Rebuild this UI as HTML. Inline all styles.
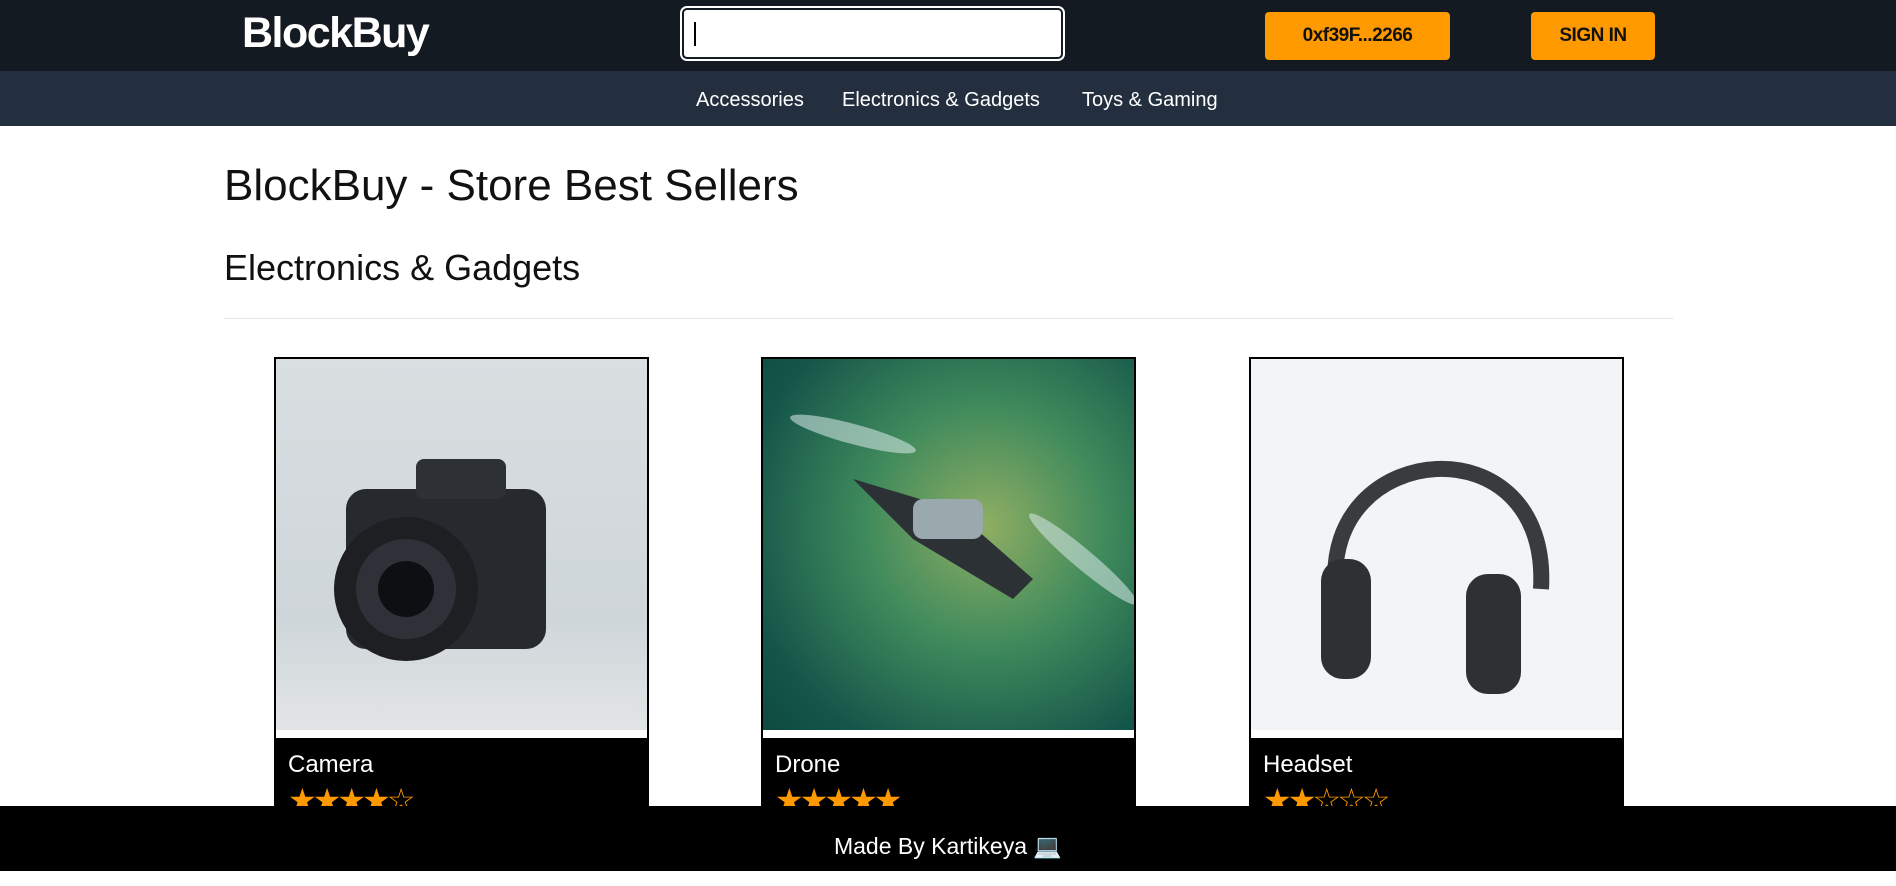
<!DOCTYPE html>
<html><head><meta charset="utf-8"><style>
*{margin:0;padding:0;box-sizing:border-box}
body{width:1896px;height:871px;overflow:hidden;background:#fff;font-family:"Liberation Sans",sans-serif;position:relative}
.top{position:absolute;left:0;top:0;width:1896px;height:71px;background:#131a22}
.logo{position:absolute;left:242px;top:9px;color:#fff;font-weight:bold;font-size:43px;letter-spacing:-1.5px}
.search{position:absolute;left:680px;top:6px;width:385px;height:55px;background:#fff;border-radius:7px;border:2px solid #fff;outline:2px solid #131a22;outline-offset:-4px}
.search:after{content:"";position:absolute;left:12px;top:14px;width:2px;height:24px;background:#000}
.btn{position:absolute;top:12px;height:48px;background:#ff9900;border-radius:4px;font-weight:bold;font-size:19px;color:#111;text-align:center;line-height:48px;letter-spacing:-0.5px}
.nav{position:absolute;left:0;top:71px;width:1896px;height:55px;background:#232f3e;color:#fff;font-size:20px}
.nav span{position:absolute;top:18px}
h1{position:absolute;left:224px;top:161px;font-weight:normal;font-size:44px;color:#111}
h2{position:absolute;left:224px;top:247px;font-weight:normal;font-size:36px;color:#111}
.hr{position:absolute;left:224px;top:318px;width:1449px;height:1px;background:#e4e4e4}
.card{position:absolute;top:357px;width:375px;height:460px;background:#000;border:2px solid #000}
.img{position:absolute;left:0;top:0;width:371px;height:379px;background:#fff}
.img .ph{position:absolute;left:0;top:0;width:371px;height:371px}
.t{position:absolute;left:12px;top:392px;color:#fff;font-size:24px}
.s{position:absolute;left:12px;top:422px;color:#ff9900;font-size:32px;letter-spacing:-4px}
.foot{position:absolute;left:0;top:806px;width:1896px;height:65px;background:#000;color:#fff;font-size:23px;text-align:center;line-height:80px}
</style></head><body>
<div class="top">
<div class="logo">BlockBuy</div>
<div class="search"></div>
<div class="btn" style="left:1265px;width:185px">0xf39F...2266</div>
<div class="btn" style="left:1531px;width:124px">SIGN IN</div>
</div>
<div class="nav"><span style="left:696px">Accessories</span><span style="left:842px">Electronics &amp; Gadgets</span><span style="left:1082px">Toys &amp; Gaming</span></div>
<h1>BlockBuy - Store Best Sellers</h1>
<h2>Electronics &amp; Gadgets</h2>
<div class="hr"></div>

<div class="card" style="left:274px"><div class="img"><div class="ph" style="background:linear-gradient(#d9dee1,#cfd6d9 70%,#e2e5e6)">
<svg width="371" height="371"><rect x="70" y="130" width="200" height="160" rx="20" fill="#26292d"/><rect x="140" y="100" width="90" height="40" rx="8" fill="#2d3035"/><circle cx="130" cy="230" r="72" fill="#1d1f22"/><circle cx="130" cy="230" r="50" fill="#2e3238"/><circle cx="130" cy="230" r="28" fill="#0d0f12"/></svg></div></div>
<div class="t">Camera</div><div class="s">★★★★☆</div></div>

<div class="card" style="left:761px"><div class="img"><div class="ph" style="background:radial-gradient(circle at 60% 45%,#8fae63,#3f8a5c 40%,#15564a 80%,#0d4a40)">
<svg width="371" height="371"><ellipse cx="90" cy="75" rx="65" ry="10" fill="#cfe2e0" opacity=".6" transform="rotate(15 90 75)"/><ellipse cx="320" cy="200" rx="70" ry="10" fill="#cfe2e0" opacity=".6" transform="rotate(40 320 200)"/><path d="M90 120 L190 150 L270 220 L250 240 L150 180 Z" fill="#2b3134"/><rect x="150" y="140" width="70" height="40" rx="10" fill="#9aa9ad"/></svg></div></div>
<div class="t">Drone</div><div class="s">★★★★★</div></div>

<div class="card" style="left:1249px"><div class="img"><div class="ph" style="background:#f3f4f6">
<svg width="371" height="371"><path d="M85 230 C70 80 300 60 290 230" fill="none" stroke="#3a3b3d" stroke-width="16"/><rect x="70" y="200" width="50" height="120" rx="22" fill="#2f3033"/><rect x="215" y="215" width="55" height="120" rx="22" fill="#2f3033"/></svg></div></div>
<div class="t">Headset</div><div class="s">★★☆☆☆</div></div>

<div class="foot">Made By Kartikeya 💻</div>
</body></html>
